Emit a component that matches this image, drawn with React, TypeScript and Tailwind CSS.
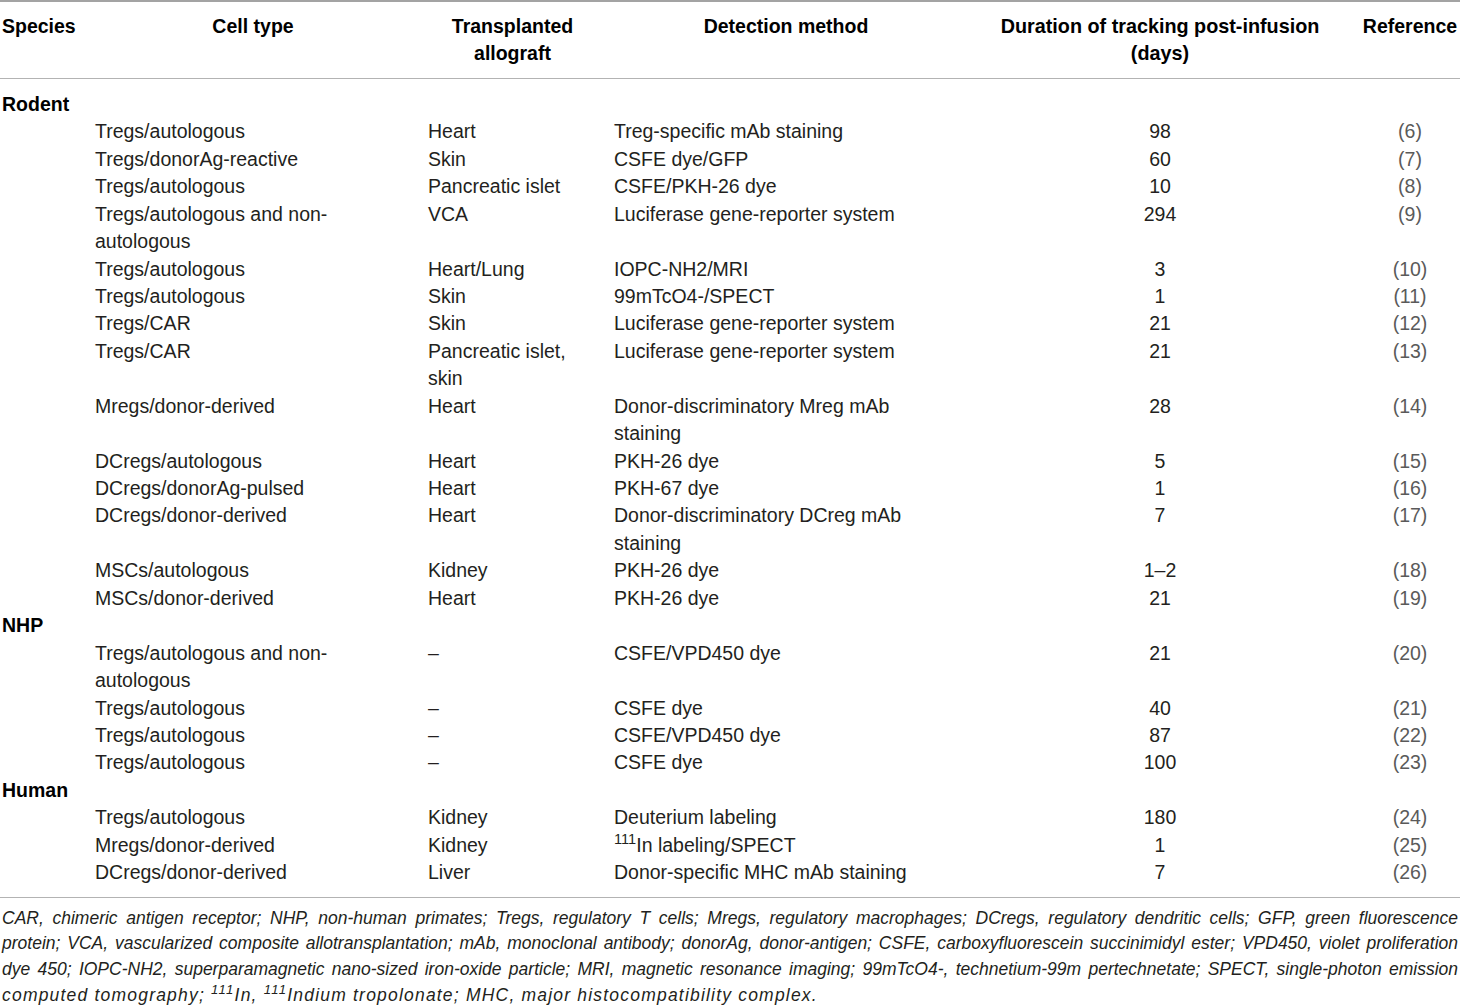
import { ReactNode } from 'react';

type Row = {
  cell: ReactNode;
  graft: ReactNode;
  method: ReactNode;
  days: string;
  ref: string;
};

type Group = { species: string; rows: Row[] };

const groups: Group[] = [
  {
    species: 'Rodent',
    rows: [
      { cell: 'Tregs/autologous', graft: 'Heart', method: 'Treg-specific mAb staining', days: '98', ref: '(6)' },
      { cell: 'Tregs/donorAg-reactive', graft: 'Skin', method: 'CSFE dye/GFP', days: '60', ref: '(7)' },
      { cell: 'Tregs/autologous', graft: 'Pancreatic islet', method: 'CSFE/PKH-26 dye', days: '10', ref: '(8)' },
      {
        cell: (
          <>
            Tregs/autologous and non-
            <br />
            autologous
          </>
        ),
        graft: 'VCA',
        method: 'Luciferase gene-reporter system',
        days: '294',
        ref: '(9)',
      },
      { cell: 'Tregs/autologous', graft: 'Heart/Lung', method: 'IOPC-NH2/MRI', days: '3', ref: '(10)' },
      { cell: 'Tregs/autologous', graft: 'Skin', method: '99mTcO4-/SPECT', days: '1', ref: '(11)' },
      { cell: 'Tregs/CAR', graft: 'Skin', method: 'Luciferase gene-reporter system', days: '21', ref: '(12)' },
      {
        cell: 'Tregs/CAR',
        graft: (
          <>
            Pancreatic islet,
            <br />
            skin
          </>
        ),
        method: 'Luciferase gene-reporter system',
        days: '21',
        ref: '(13)',
      },
      {
        cell: 'Mregs/donor-derived',
        graft: 'Heart',
        method: (
          <>
            Donor-discriminatory Mreg mAb
            <br />
            staining
          </>
        ),
        days: '28',
        ref: '(14)',
      },
      { cell: 'DCregs/autologous', graft: 'Heart', method: 'PKH-26 dye', days: '5', ref: '(15)' },
      { cell: 'DCregs/donorAg-pulsed', graft: 'Heart', method: 'PKH-67 dye', days: '1', ref: '(16)' },
      {
        cell: 'DCregs/donor-derived',
        graft: 'Heart',
        method: (
          <>
            Donor-discriminatory DCreg mAb
            <br />
            staining
          </>
        ),
        days: '7',
        ref: '(17)',
      },
      { cell: 'MSCs/autologous', graft: 'Kidney', method: 'PKH-26 dye', days: '1–2', ref: '(18)' },
      { cell: 'MSCs/donor-derived', graft: 'Heart', method: 'PKH-26 dye', days: '21', ref: '(19)' },
    ],
  },
  {
    species: 'NHP',
    rows: [
      {
        cell: (
          <>
            Tregs/autologous and non-
            <br />
            autologous
          </>
        ),
        graft: '–',
        method: 'CSFE/VPD450 dye',
        days: '21',
        ref: '(20)',
      },
      { cell: 'Tregs/autologous', graft: '–', method: 'CSFE dye', days: '40', ref: '(21)' },
      { cell: 'Tregs/autologous', graft: '–', method: 'CSFE/VPD450 dye', days: '87', ref: '(22)' },
      { cell: 'Tregs/autologous', graft: '–', method: 'CSFE dye', days: '100', ref: '(23)' },
    ],
  },
  {
    species: 'Human',
    rows: [
      { cell: 'Tregs/autologous', graft: 'Kidney', method: 'Deuterium labeling', days: '180', ref: '(24)' },
      {
        cell: 'Mregs/donor-derived',
        graft: 'Kidney',
        method: (
          <>
            <sup>111</sup>In labeling/SPECT
          </>
        ),
        days: '1',
        ref: '(25)',
      },
      { cell: 'DCregs/donor-derived', graft: 'Liver', method: 'Donor-specific MHC mAb staining', days: '7', ref: '(26)' },
    ],
  },
];

const footnote = [
  'CAR, chimeric antigen receptor; NHP, non-human primates; Tregs, regulatory T cells; Mregs, regulatory macrophages; DCregs, regulatory dendritic cells; GFP, green fluorescence',
  'protein; VCA, vascularized composite allotransplantation; mAb, monoclonal antibody; donorAg, donor-antigen; CSFE, carboxyfluorescein succinimidyl ester; VPD450, violet proliferation',
  'dye 450; IOPC-NH2, superparamagnetic nano-sized iron-oxide particle; MRI, magnetic resonance imaging; 99mTcO4-, technetium-99m pertechnetate; SPECT, single-photon emission',
];

const th = 'pt-[11px] pb-[10px] font-bold align-top text-center text-black';

const App = () => {
  return (
    <div className="w-[1460px] bg-white font-['Liberation_Sans',Arial,sans-serif] text-[19.5px] leading-[27.43px] text-[#231f20]">
      <table className="w-full table-fixed border-t-2 border-[#a3a3a3]">
        <colgroup>
          <col className="w-[95px]" />
          <col className="w-[333px]" />
          <col className="w-[186px]" />
          <col className="w-[361px]" />
          <col className="w-[387px]" />
          <col className="w-[98px]" />
        </colgroup>
        <thead>
          <tr className="border-b border-[#b3b3b3]">
            <th className={`${th} text-left pl-[2px]`}>Species</th>
            <th className={`${th} pr-[17px]`}>Cell type</th>
            <th className={`${th} pr-[17px]`}>
              Transplanted
              <br />
              allograft
            </th>
            <th className={`${th} pr-[17px]`}>Detection method</th>
            <th className={`${th} pr-[17px] text-[19.8px]`}>
              Duration of tracking post-infusion
              <br />
              (days)
            </th>
            <th className={`${th} pr-[2px]`}>Reference</th>
          </tr>
        </thead>
        {groups.map((group, gi) => (
          <tbody key={group.species}>
            <tr>
              <td colSpan={6} className={`pl-[2px] font-bold text-black ${gi === 0 ? 'pt-[12px]' : ''}`}>
                {group.species}
              </td>
            </tr>
            {group.rows.map((row, ri) => {
              const last = gi === groups.length - 1 && ri === group.rows.length - 1;
              const td = `align-top p-0 pr-[17px] ${last ? 'pb-[10px]' : ''}`;
              return (
                <tr key={ri} className={last ? 'border-b border-[#b3b3b3]' : ''}>
                  <td className={td} />
                  <td className={td}>{row.cell}</td>
                  <td className={td}>{row.graft}</td>
                  <td className={td}>{row.method}</td>
                  <td className={`${td} text-center`}>{row.days}</td>
                  <td className={`${td} !pr-[2px] text-center text-[#5a5a5a]`}>{row.ref}</td>
                </tr>
              );
            })}
          </tbody>
        ))}
      </table>
      <div className="px-[2px] pt-[8px] italic text-[17.5px] leading-[25.7px]">
        {footnote.map((line) => (
          <div key={line} className="text-justify [text-align-last:justify]">
            {line}
          </div>
        ))}
        <div className="tracking-[1.2px]">
          computed tomography; <sup>111</sup>In, <sup>111</sup>Indium tropolonate; MHC, major histocompatibility
          complex.
        </div>
      </div>
    </div>
  );
};

export default App;
